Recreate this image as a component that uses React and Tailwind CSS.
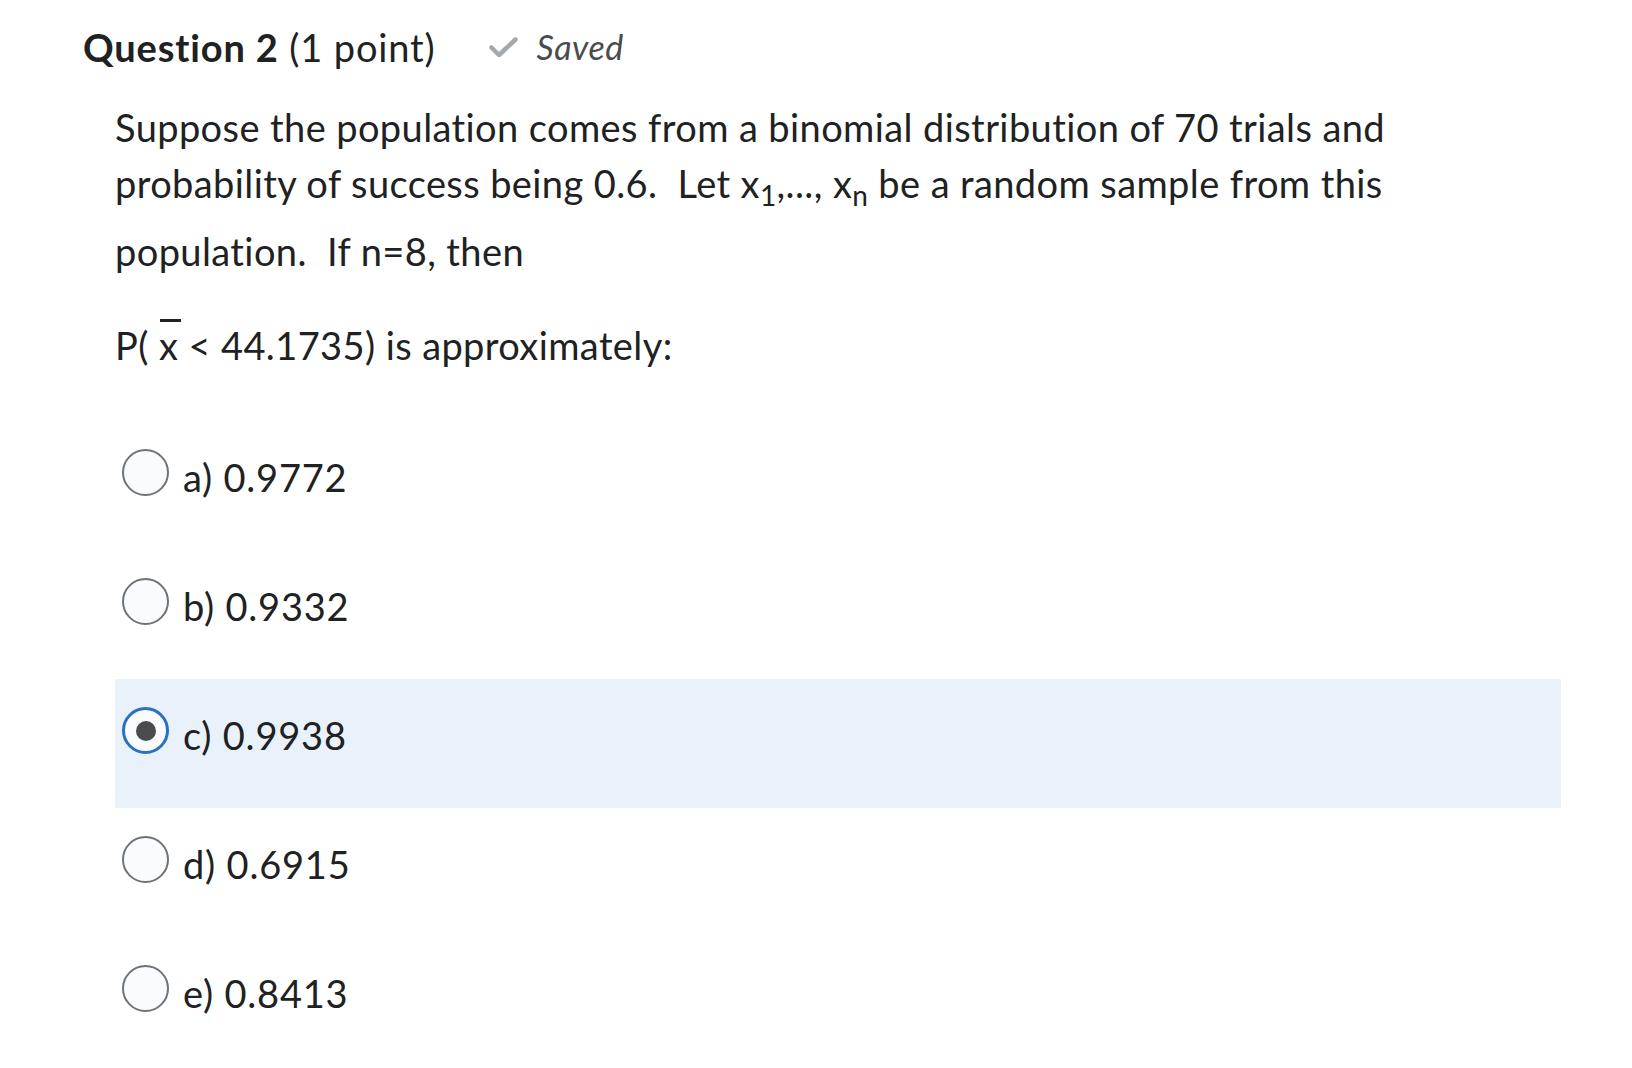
import React from 'react';

const OPTIONS = [
  { key: 'a', label: 'a) 0.9772' },
  { key: 'b', label: 'b) 0.9332' },
  { key: 'c', label: 'c) 0.9938', checked: true },
  { key: 'd', label: 'd) 0.6915' },
  { key: 'e', label: 'e) 0.8413' },
];

function Radio({ checked }) {
  if (checked) {
    return (
      <span className="flex h-[47px] w-[47px] shrink-0 items-center justify-center rounded-full border-[3px] border-[#2a72c0] bg-[#f9fbff]">
        <span className="h-[20px] w-[20px] rounded-full bg-[#494c4e]" />
      </span>
    );
  }
  return <span className="h-[47px] w-[47px] shrink-0 rounded-full border-2 border-[#6e7376] bg-[#f9fbff]" />;
}

export default function App() {
  return (
    <div className="min-h-screen bg-white pt-[19px] pl-[83px] pr-[71px] text-[38px] leading-[56px] tracking-[0.4px] text-[#202122] font-['Lato','Liberation_Sans',sans-serif]">
      <div className="flex items-center">
        <h2 className="tracking-[0.85px]">
          <span className="font-bold">Question 2</span> (1 point)
        </h2>
        <span className="ml-[53px] flex items-center gap-[19px] text-[34px] italic tracking-[0.5px] text-[#494c4e]">
          <svg width="29" height="21" viewBox="0 0 29 21" fill="none" aria-hidden="true">
            <path d="M2.5 10.5 L10 18 L26.5 2.5" stroke="#a4a9ae" strokeWidth="4.5" strokeLinecap="round" strokeLinejoin="round" />
          </svg>
          Saved
        </span>
      </div>

      <div className="pl-[32px]">
        <p className="mt-[24px]">
          Suppose the population comes from a binomial distribution of 70 trials and
          <br />
          probability of success being 0.6.&nbsp; Let x
          <sub className="static align-[-8px] text-[28px] leading-[56px]">1</sub>,..., x
          <sub className="static align-[-8px] text-[28px] leading-[56px]">n</sub> be a random sample from this
          <br />
          population.&nbsp; If n=8, then
        </p>
        <p className="mt-[38px]">
          P({' '}
          <span className="relative inline-block">
            x
            <span className="absolute left-[1px] top-[2px] h-[3px] w-[21px] bg-[#202122]" />
          </span>{' '}
          &lt; 44.1735) is approximately:
        </p>

        <div className="mt-[48px] flex flex-col">
          {OPTIONS.map(opt => (
            <label
              key={opt.key}
              className={`flex h-[129px] items-start gap-[14px] pl-[7px] pt-[28px] ${opt.checked ? 'bg-[#e9f1fb]' : ''}`}
            >
              <Radio checked={opt.checked} />
              <span className="mt-[5px] leading-[47px] tracking-[0.8px]">{opt.label}</span>
            </label>
          ))}
        </div>
      </div>
    </div>
  );
}
